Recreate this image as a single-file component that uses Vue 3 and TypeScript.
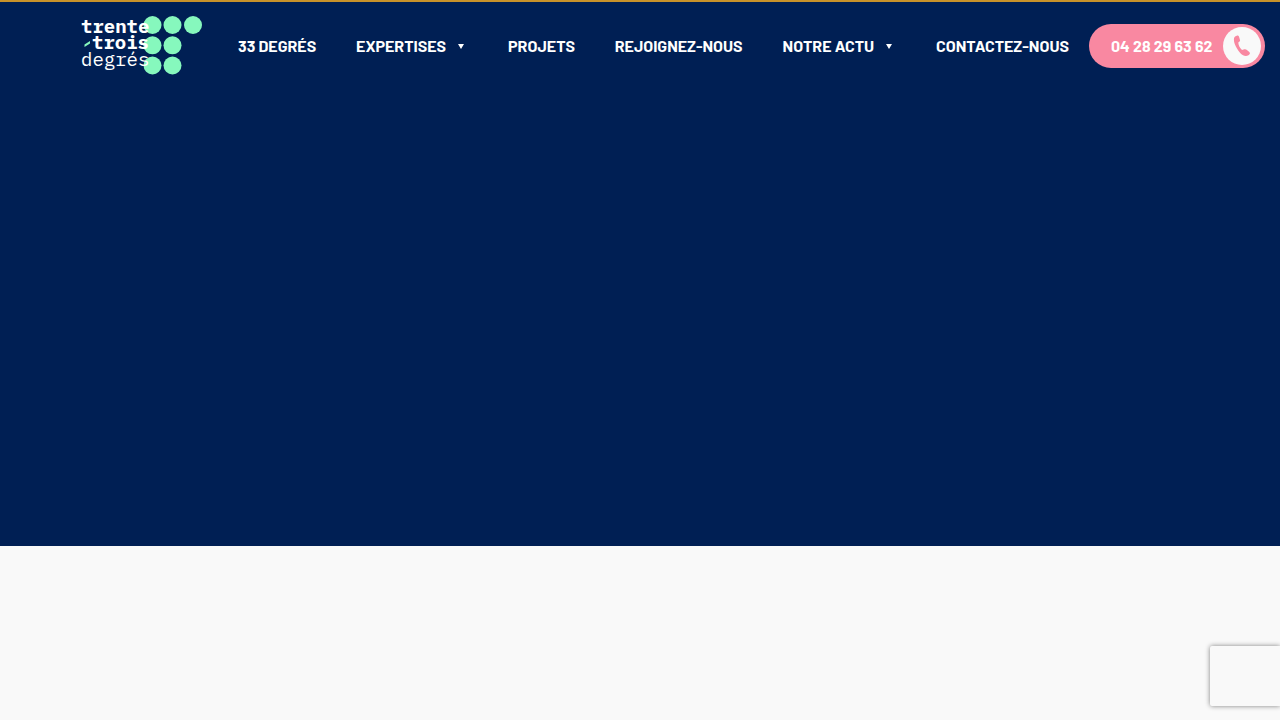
<script setup lang="ts">
interface NavItem {
  label: string
  submenu?: boolean
}

const items: NavItem[] = [
  { label: '33 DEGRÉS' },
  { label: 'EXPERTISES', submenu: true },
  { label: 'PROJETS' },
  { label: 'REJOIGNEZ-NOUS' },
  { label: 'NOTRE ACTU', submenu: true },
  { label: 'CONTACTEZ-NOUS' },
]

const dots = [
  [70.5, 9], [90.5, 9], [111, 9],
  [70.5, 29.300], [90.5, 29.300],
  [70.5, 49.500], [90.5, 49.500],
]
</script>

<template>
  <div class="page">
    <div class="hero">
      <header class="header">
        <a class="logo" href="#" aria-label="trente-trois degrés">
          <svg width="120" height="60" viewBox="0 0 120 60">
            <circle v-for="([x, y], i) in dots" :key="i" :cx="x" :cy="y" r="9" fill="#86f8bd" />
            <path d="M2.500 28.500l5.500-3.500v2.500l-5.500 3.500z" fill="#86f8bd" />
            <g class="wordmark">
              <text x="-1" y="17" class="strong">trente</text>
              <text x="10" y="33" class="strong">trois</text>
              <text x="-1" y="50">degrés</text>
            </g>
          </svg>
        </a>
        <nav class="nav">
          <a v-for="item in items" :key="item.label" class="link" href="#">
            {{ item.label }}
            <svg v-if="item.submenu" class="arrow" width="6" height="5" viewBox="0 0 6 5">
              <path d="M0 0h6L3 5z" fill="currentColor" />
            </svg>
          </a>
        </nav>
        <a class="phone" href="tel:0428296362">
          04 28 29 63 62
          <span class="disc">
            <svg width="18" height="22" viewBox="0 0 18 22">
              <path d="M3.700.8C5 .3 5.700.9 6.100 2L7 5C7.200 5.900 6.900 6.500 5.300 7.600C5.400 10.300 6.700 13 9 15L10.600 14.400C12.400 13.900 13.100 14.300 13.900 15L16.300 17C17.200 17.900 17.100 18.600 16.500 19.300C15.600 20.500 14.200 21.100 12.800 21C9 20.800 5.900 17.100 4 13.600C2.300 10.500.8 7.200.9 4.400C.9 2.600 1.900 1.300 3.700.8Z" fill="#f988a1" />
            </svg>
          </span>
        </a>
      </header>
    </div>
    <aside class="badge" aria-label="reCAPTCHA"></aside>
  </div>
</template>

<style>
body {
  margin: 0;
  background: #f9f9f9;
}
</style>

<style scoped>
.page {
  min-height: 100vh;
  overflow: hidden;
  background: #f9f9f9;
  font-family: Barlow, Roboto, "Liberation Sans", sans-serif;
}

.hero {
  box-sizing: border-box;
  min-height: 546px;
  border-top: 2px solid #c8922a;
  background: #001f54;
}

.header {
  display: flex;
  align-items: center;
  padding: 14px 15px 14px 82px;
}

.logo {
  display: flex;
  flex: none;
}

.logo svg {
  overflow: visible;
}

.wordmark {
  fill: #fff;
  font-family: "IBM Plex Mono", "Liberation Mono", monospace;
  font-size: 19px;
}

.strong {
  font-weight: 700;
}

.nav {
  display: flex;
  flex: 1;
  justify-content: space-between;
  margin: 0 20px 0 36px;
}

.link {
  display: flex;
  align-items: center;
  color: #fff;
  font-size: 16px;
  font-weight: 700;
  line-height: 24px;
  text-decoration: none;
  white-space: nowrap;
}

.arrow {
  margin: 0 4px 0 12px;
}

.phone {
  display: flex;
  flex: none;
  box-sizing: border-box;
  align-items: center;
  justify-content: space-between;
  gap: 10px;
  min-width: 176px;
  padding: 3px 4px 3px 22px;
  border-radius: 22px;
  background: #f988a1;
  color: #fff;
  font-size: 16px;
  font-weight: 700;
  line-height: 24px;
  text-decoration: none;
  white-space: nowrap;
}

.disc {
  display: flex;
  align-items: center;
  justify-content: center;
  width: 38px;
  height: 38px;
  border-radius: 50%;
  background: #f9f9f9;
}

.badge {
  position: fixed;
  right: 0;
  bottom: 14px;
  width: 70px;
  height: 60px;
  border-radius: 2px 0 0 2px;
  box-shadow: 0 0 5px #808080;
}
</style>
